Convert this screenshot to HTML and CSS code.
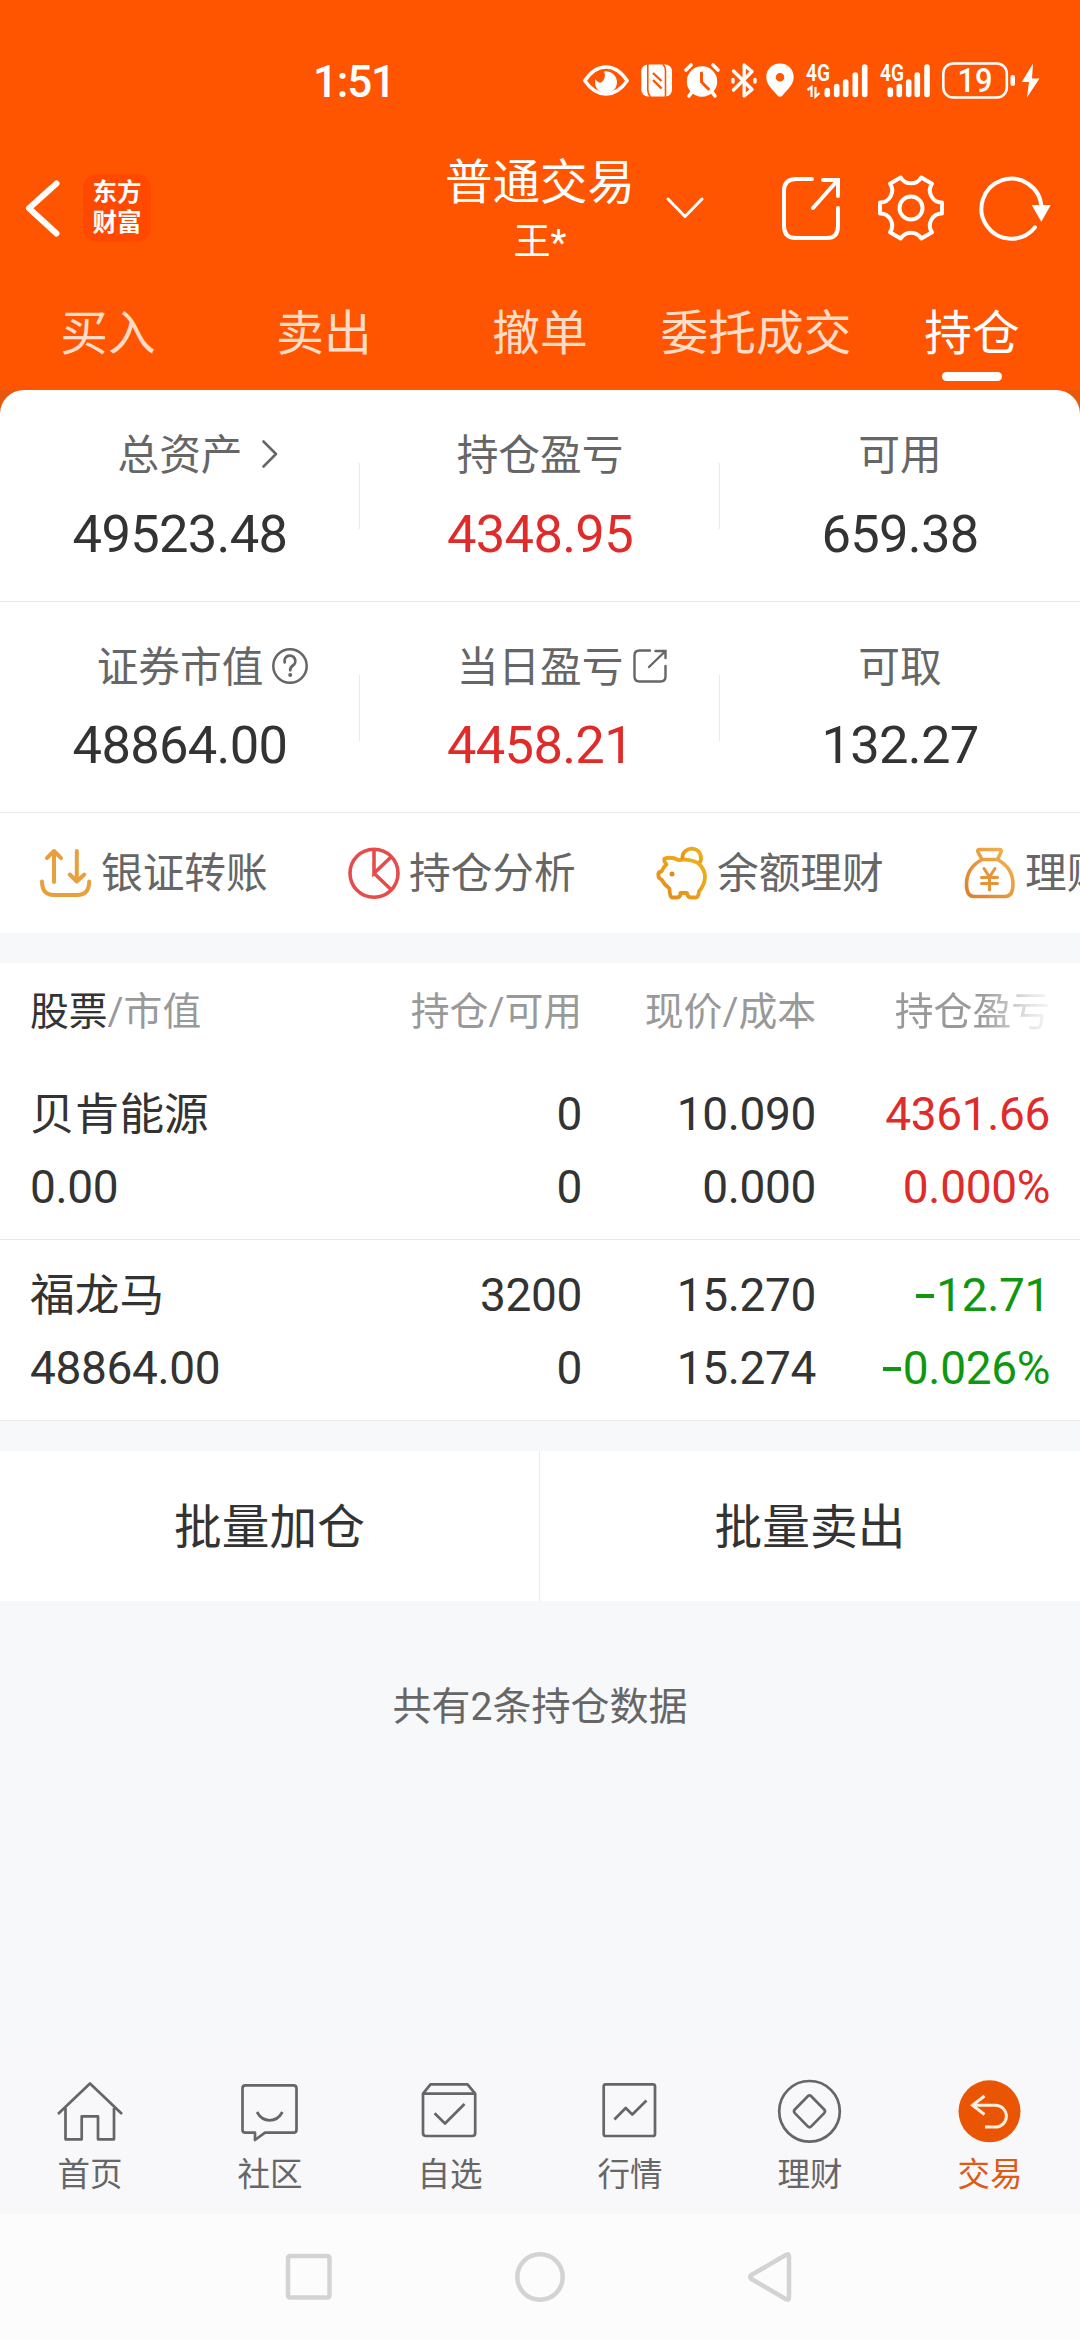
FILE: index.html
```html
<!DOCTYPE html>
<html lang="zh-CN">
<head>
<meta charset="utf-8">
<title>普通交易 - 持仓</title>
<link rel="stylesheet" href="styles.css">
</head>
<body>
<div class="phone">
  <header class="header">
    <div class="status">
      <span class="clock">1:51</span>
      <div class="status-icons">
        <svg width="48" height="44" viewBox="582 58 48 44"><path d="M584.8 80.7Q594 67 606 67T627.2 80.7Q618 94 606 94T584.8 80.7Z" fill="none" stroke="#fff" stroke-width="3.4" stroke-linejoin="round"/><path d="M604 71.500A11 11 0 1 1 595.500 79Q600 86 603.500 80Q606 76 604 71.500Z" fill="#fff"/></svg>
        <svg class="nfc" width="32" height="44" viewBox="641 58 32 44"><rect x="641.300" y="64.500" width="30.700" height="32" rx="6.500" fill="#fff"/><path d="M647.800 64V90Q647.800 94 650.500 97M665.500 97V71Q665.500 67 663 64" fill="none" stroke="#ff5500" stroke-width="1.600"/><path d="M653 73L661.500 81M653 80L661.500 88.500" fill="none" stroke="#ff5500" stroke-width="2.400"/></svg>
        <svg class="alarm" width="36" height="44" viewBox="684 58 36 44"><circle cx="702" cy="81.500" r="15.200" fill="#fff"/><path d="M686 70L691 65M718 70L713 65M692 92L689 96M712 92L715 96" stroke="#fff" stroke-width="3.600" stroke-linecap="round"/><path d="M701.500 73V82L708.500 89" fill="none" stroke="#ff5500" stroke-width="3" stroke-linecap="round"/></svg>
        <svg class="bt" width="26" height="44" viewBox="731 58 26 44"><path d="M733.500 71L752 89.500L744.200 96V65L752 71.500L733.500 90" fill="none" stroke="#fff" stroke-width="3.400" stroke-linecap="round" stroke-linejoin="round"/><path d="M733 79.500V82M755 79.500V82" stroke="#fff" stroke-width="3.400" stroke-linecap="round"/></svg>
        <svg class="pin" width="28" height="44" viewBox="766 58 28 44"><path fill-rule="evenodd" d="M780 63.500C788 63.500 793.700 69.500 793.700 77C793.700 85 786 91 782.500 95.500Q780 98 777.500 95.500C774 91 766.300 85 766.300 77C766.300 69.500 772 63.500 780 63.500ZM780 73A4.300 4.300 0 1 0 780 81.600A4.300 4.300 0 1 0 780 73Z" fill="#fff"/></svg>
        <svg class="sig1" width="62" height="44" viewBox="806 58 62 44"><text x="806" y="81" class="net" textLength="24" lengthAdjust="spacingAndGlyphs">4G</text><path d="M827.300 90.500V94.500M836.700 86.500V94.500M845.700 82V94.500M855.300 75V94.500M864.700 67V94.500" stroke="#fff" stroke-width="5.600" stroke-linecap="round"/><path d="M807.500 90L811.500 87V97M815.500 87V96.500L819.500 93" fill="none" stroke="#fff" stroke-width="2.200"/></svg>
        <svg class="sig2" width="51" height="44" viewBox="880 58 51 44"><text x="880" y="81" class="net" textLength="24" lengthAdjust="spacingAndGlyphs">4G</text><path d="M890.300 90V94.500M899.300 86.500V94.500M908.700 82V94.500M917.300 75V94.500M927 67V94.500" stroke="#fff" stroke-width="5.600" stroke-linecap="round"/></svg>
        <svg class="batt" width="74" height="44" viewBox="942 58 74 44"><rect x="943.300" y="63.500" width="63.500" height="34" rx="10" fill="none" stroke="#fff" stroke-width="2.600"/><rect x="1010.500" y="75" width="4.500" height="11" rx="2" fill="#fff"/><text x="975" y="92" class="pct" text-anchor="middle" textLength="35" lengthAdjust="spacingAndGlyphs">19</text></svg>
        <svg class="bolt" width="18" height="44" viewBox="1022 58 18 44"><path d="M1033 63.500L1021.800 82H1029L1027 97.500L1039.500 78.500H1032Z" fill="#fff"/></svg>
      </div>
    </div>

    <div class="titlebar">
      <div class="title-left">
        <svg width="36" height="60" viewBox="26 178 36 60"><path d="M56.500 183.500L29 208.300L56.500 233.500" fill="none" stroke="#fff" stroke-width="6" stroke-linecap="round" stroke-linejoin="round"/></svg>
        <div class="logo">东方<br>财富</div>
      </div>
      <div class="title">
        <div class="title-main">普通交易</div>
        <div class="title-sub">王*</div>
      </div>
      <div class="title-right">
        <svg class="down" width="40" height="30" viewBox="664 192 40 30"><path d="M667 198L684 215.500L701 198" fill="none" stroke="#fff" stroke-width="3" stroke-linecap="round" stroke-linejoin="round"/></svg>
        <svg class="share" width="60" height="68" viewBox="780 174 60 68"><g fill="none" stroke="#fff" stroke-width="4" stroke-linecap="round"><path d="M811 179H795Q783 179 783 191V226Q783 238 795 238H826Q837 238 837 226V208"/><path d="M822 180H837V196M812 208L836 181"/></g></svg>
        <svg class="gear" width="68" height="68" viewBox="-34 -34 68 68"><path d="M-10.300-30.500A12 12 0 0 0 10.300-30.500L21-24.300A12 12 0 0 0 31-5.500V5.500A12 12 0 0 0 21 24.300L10.300 30.500A12 12 0 0 0-10.300 30.500L-21 24.300A12 12 0 0 0-31 5.500V-5.500A12 12 0 0 0-21-24.300Z" fill="none" stroke="#fff" stroke-width="4" stroke-linejoin="round"/><circle r="11.500" fill="none" stroke="#fff" stroke-width="4"/></svg>
        <svg class="refresh" width="74" height="68" viewBox="978 174 74 68"><path d="M1034 227.300A30 30 0 1 1 1040.400 207" fill="none" stroke="#fff" stroke-width="4" stroke-linecap="round"/><path d="M1030.700 205H1049.800L1040.300 221.700Z" fill="#fff"/></svg>
      </div>
    </div>

    <nav class="tabs">
      <a class="tab">买入</a><a class="tab">卖出</a><a class="tab">撤单</a><a class="tab">委托成交</a><a class="tab tab-active">持仓</a>
    </nav>
  </header>

  <div class="card-wrap">
    <section class="card">
      <div class="stats">
        <div class="stat">
          <div class="label"><span></span>总资产<svg class="hint chevron" width="18" height="30" viewBox="260 439 18 30"><path d="M262.500 441.500L275 454L262.500 466.500" fill="none" stroke="#666" stroke-width="2.600" stroke-linecap="round" stroke-linejoin="round"/></svg></div>
          <div class="value">49523.48</div>
        </div>
        <div class="stat"><div class="label">持仓盈亏</div><div class="value up">4348.95</div></div>
        <div class="stat"><div class="label">可用</div><div class="value">659.38</div></div>
      </div>
      <div class="stats">
        <div class="stat">
          <div class="label"><span></span>证券市值<svg class="hint" width="38" height="38" viewBox="0 0 38 38"><circle cx="19" cy="19" r="16.700" fill="none" stroke="#666" stroke-width="2.500"/><path d="M13.700 15.300A5.400 5.400 0 1 1 21.900 18.500Q19.200 20.300 19.200 23.300" fill="none" stroke="#666" stroke-width="2.800" stroke-linecap="round"/><circle cx="19.200" cy="28" r="2" fill="#666"/></svg></div>
          <div class="value">48864.00</div>
        </div>
        <div class="stat">
          <div class="label"><span></span>当日盈亏<svg class="hint ext" width="36" height="36" viewBox="632.500 647 36 36"><g fill="none" stroke="#666" stroke-width="2.400" stroke-linecap="round"><path d="M650.500 649.500H640Q635 649.500 635 654.500V675.500Q635 680.500 640 680.500H661Q666 680.500 666 675.500V665"/><path d="M656 650H666V657M649.500 666L665 651"/></g></svg></div>
          <div class="value up">4458.21</div>
        </div>
        <div class="stat"><div class="label">可取</div><div class="value">132.27</div></div>
      </div>
      <div class="quick">
        <div class="quick-item"><svg width="52" height="52" viewBox="40 846 52 52"><g fill="none" stroke="#e8a03c" stroke-width="4" stroke-linecap="round" stroke-linejoin="round"><path d="M54 881V850M47 857L54 850L61 857M76.800 850V880M69.800 873.500L76.800 880.500L84.300 873.500M42 880.500Q42 894 54 894H77Q89.200 894 89.200 880.500"/></g></svg><span>银证转账</span></div>
        <div class="quick-item"><svg width="52" height="52" viewBox="347.500 846 52 52"><g fill="none" stroke="#e64c4c" stroke-width="3.600"><circle cx="373.500" cy="872.300" r="24"/><path d="M373.500 848V872.300L390.500 856M373.500 872.300L390.500 888.500"/></g></svg><span>持仓分析</span></div>
        <div class="quick-item"><svg width="52" height="52" viewBox="655.500 846 52 52"><defs><linearGradient id="pig" x1="0" y1="1" x2="1" y2="0"><stop offset="0" stop-color="#e48a1e"/><stop offset="1" stop-color="#f0b414"/></linearGradient></defs><g fill="none" stroke="url(#pig)" stroke-width="3.800" stroke-linejoin="round"><path d="M678 859Q671 855.500 664 857.500Q663 860 666 863.500Q663 866 661 870.500Q657.800 871 657.800 873.500Q657.800 877.500 661 878.500Q664 884 669 887.500Q669 896.500 672 896.500H676.500Q680 896.500 680 892H686.500Q687 896.500 690.500 896.500H695Q698 896.500 698.500 890.500Q704.500 883 704.500 876Q704.500 868 697.500 862Q689 857.500 678 859Z"/><path d="M682 858A9.300 9.300 0 1 1 699 862"/></g><circle cx="671.500" cy="873" r="2.500" fill="#e48a1e"/></svg><span>余额理财</span></div>
        <div class="quick-item"><svg width="52" height="52" viewBox="963.500 846 52 52"><defs><linearGradient id="bag" x1="0" y1="1" x2="1" y2="0"><stop offset="0" stop-color="#e07e28"/><stop offset="1" stop-color="#f2b552"/></linearGradient></defs><g fill="none" stroke="url(#bag)" stroke-width="3.600" stroke-linecap="round" stroke-linejoin="round"><path d="M981.500 858.500L977.500 851Q976.500 848.500 979 848.500H999Q1001.500 848.500 1000.500 851L997 858.500ZM981.500 858.500Q966 867 966 883Q966 895.500 973.500 895.500H1004.500Q1012.500 895.500 1012.500 883Q1012.500 867 997 858.500"/></g><path d="M983.500 867.500L989 876L994.500 867.500M989 876V889M981 876.500H997M981 882.500H997" fill="none" stroke="#e8923a" stroke-width="3" stroke-linecap="round"/></svg><span>理财</span></div>
      </div>
    </section>
  </div>

  <section class="holdings">
    <div class="row row-head"><span><b>股票</b>/市值</span><span>持仓/可用</span><span>现价/成本</span><span class="fade">持仓盈亏</span></div>
    <div class="row row-data">
      <span class="name">贝肯能源</span><span>0</span><span>10.090</span><span class="up">4361.66</span>
      <span>0.00</span><span>0</span><span>0.000</span><span class="up">0.000%</span>
    </div>
    <div class="row row-data">
      <span class="name">福龙马</span><span>3200</span><span>15.270</span><span class="down-val"><i class="minus"></i>12.71</span>
      <span>48864.00</span><span>0</span><span>15.274</span><span class="down-val"><i class="minus"></i>0.026%</span>
    </div>
  </section>

  <div class="actions"><button class="action">批量加仓</button><button class="action">批量卖出</button></div>
  <p class="summary">共有2条持仓数据</p>

  <nav class="bottom">
    <a class="nav"><svg width="66" height="66" viewBox="0 0 66 66"><path d="M1 36L33 5.500L65 36M8.500 30V61.300H24.700V38.300H41V61.300H57V30"/></svg>首页</a>
    <a class="nav"><svg width="66" height="66" viewBox="0 0 66 66"><path d="M8.500 7.300H56.500Q59.500 7.300 59.500 10.300V51.700Q59.500 54.700 56.500 54.700H28L18 62V54.700H8.500Q5.500 54.700 5.500 51.700V10.300Q5.500 7.300 8.500 7.300ZM20 34Q24.500 42.300 32.700 42.300T45.400 34"/></svg>社区</a>
    <a class="nav"><svg width="66" height="66" viewBox="0 0 66 66"><path d="M6 15.700L13.500 6.300H50.500L58.200 15.700V55Q58.200 58 55.200 58H9Q6 58 6 55ZM6 15.700H58.200M17.600 35.300L28 45.500L47.500 26"/></svg>自选</a>
    <a class="nav"><svg width="66" height="66" viewBox="0 0 66 66"><rect x="6.700" y="6.300" width="51.300" height="51.700" rx="2"/><path d="M17.400 41.500L28.700 30L35.300 36.500L49.500 22.500"/></svg>行情</a>
    <a class="nav"><svg width="66" height="66" viewBox="0 0 66 66"><circle cx="32.500" cy="33.300" r="30.300"/><path d="M31 18L17.800 31.500Q16.200 33.300 17.800 35.100L31 48.600Q32.500 50 34 48.600L47.200 35.100Q48.800 33.300 47.200 31.500L34 18Q32.500 16.600 31 18Z"/></svg>理财</a>
    <a class="nav nav-active"><svg width="66" height="66" viewBox="0 0 66 66"><circle class="disc" cx="32.500" cy="33.300" r="31"/><path class="arrow" d="M27.500 18L15.500 27.300L27.500 36.500M15.500 27.300H38.500A10.800 10.800 0 0 1 38.500 49H28"/></svg>交易</a>
  </nav>
  <div class="sysnav">
    <svg width="46" height="50" viewBox="0 0 46 50"><rect x="2" y="4" width="41.500" height="41.500" rx="2"/></svg>
    <svg width="50" height="50" viewBox="0 0 50 50"><circle cx="25" cy="25" r="22.700"/></svg>
    <svg width="44" height="50" viewBox="0 0 44 50"><path d="M3 23.300L38.500 2.600Q41 1.700 41 4.500V45.500Q41 48.300 38.500 47.400L3 26.700Q1.500 25 3 23.300Z"/></svg>
  </div>
</div>
</body>
</html>
```

FILE: styles.css
```css
* { box-sizing: border-box; }

body {
  margin: 0;
  background: #f7f8fa;
  color: #333;
  font-family: Roboto, "Noto Sans CJK SC", sans-serif;
}

svg { display: block; flex: none; overflow: visible; }

.phone {
  width: 1080px;
  height: 2340px;
  display: flex;
  flex-direction: column;
  overflow: hidden;
}

/* header */
.header {
  height: 390px;
  background: #ff5500;
  color: #fff;
}

.status {
  height: 128px;
  padding: 58px 40px 0 313px;
  display: flex;
  justify-content: space-between;
}

.clock {
  font-size: 44px;
  line-height: 48px;
  font-weight: 500;
  letter-spacing: -1.2px;
}

.status-icons { display: flex; }
.nfc { margin-left: 11px; }
.alarm { margin-left: 11px; }
.bt { margin-left: 11px; }
.pin { margin-left: 9px; }
.sig1 { margin-left: 12px; }
.sig2 { margin-left: 12px; }
.batt { margin-left: 11px; }
.bolt { margin-left: 6px; }

.net { font-size: 23px; font-weight: 600; fill: #fff; }
.pct { font-size: 33px; font-weight: 500; fill: #fff; }

.titlebar {
  height: 160px;
  display: grid;
  grid-template-columns: 1fr auto 1fr;
  align-items: center;
}

.title-left {
  display: flex;
  align-items: center;
  gap: 21px;
  padding-left: 26px;
}

.logo {
  width: 68px;
  height: 68px;
  padding-top: 4px;
  border-radius: 14px;
  background: #ff4800;
  text-align: center;
  font-size: 24.500px;
  line-height: 29.500px;
  font-weight: 700;
}

.title { padding-top: 10px; text-align: center; }
.title-main { font-size: 47.500px; line-height: 60px; }
.title-sub { font-size: 37px; line-height: 60px; }

.title-right {
  display: flex;
  align-items: center;
  justify-content: flex-end;
  padding-right: 27px;
}

.share { margin-left: 76px; }
.gear { margin-left: 36px; }
.refresh { margin-left: 34px; }

.tabs {
  height: 102px;
  display: grid;
  grid-template-columns: repeat(5, 1fr);
}

.tab {
  display: flex;
  flex-direction: column;
  align-items: center;
  padding-top: 11px;
  font-size: 47.700px;
  line-height: 70px;
  color: #ffdcc8;
}

.tab-active { color: #fff; }

.tab-active::after {
  content: "";
  width: 60px;
  height: 9px;
  margin-top: 3px;
  border-radius: 5px;
  background: #fff;
}

/* asset summary */
.card-wrap {
  background: linear-gradient(#e8580c 24px, #fff 24px);
}

.card {
  height: 543px;
  border-radius: 24px 24px 0 0;
  background: #fff;
  overflow: hidden;
}

.stats {
  height: 211px;
  display: grid;
  grid-template-columns: repeat(3, 1fr);
  border-bottom: 1px solid #eaeaea;
}

.stat {
  padding-top: 34px;
  text-align: center;
  background: linear-gradient(#eaeaea, #eaeaea) right 73px / 1px 66px no-repeat;
}

.stat:last-child { background: none; }

.stats:first-child { height: 212px; }

.label {
  display: grid;
  grid-template-columns: 1fr auto 1fr;
  align-items: center;
  font-size: 41.700px;
  line-height: 64px;
  color: #666;
}

.label:not(:has(span)) { display: block; }
.hint { margin-left: 8px; margin-top: -4px; }
.ext { margin-left: 9px; }
.chevron { margin-left: 18px; }

.value {
  margin-top: 14px;
  font-size: 52.500px;
  line-height: 64px;
  letter-spacing: -0.700px;
}

.stats + .stats .value { margin-top: 13px; }

.up { color: #e02b2b; }
.down-val { color: #0f980f; }

.quick {
  height: 120px;
  display: flex;
  gap: 79px;
  padding-left: 40px;
}

.quick-item {
  display: flex;
  flex: none;
  align-items: center;
  gap: 9px;
  width: 229px;
  font-size: 41.700px;
  line-height: 60px;
  color: #666;
  white-space: nowrap;
}

.quick-item span { padding-top: 1px; }

/* holdings */
.holdings { margin-top: 30px; background: #fff; }

.row {
  display: grid;
  grid-template-columns: 318px repeat(3, 234px);
  padding: 0 30px;
  text-align: right;
}

.row > span:nth-child(4n+1) { text-align: left; }

.row-head {
  height: 95px;
  padding-top: 18px;
  font-size: 38.800px;
  line-height: 62px;
  color: #999;
}

.row-head b { font-weight: 400; color: #333; }

.fade {
  -webkit-mask-image: linear-gradient(to right, #000 0, #000 165px, rgba(0, 0, 0, .25) 215px, transparent 245px);
  mask-image: linear-gradient(to right, #000 0, #000 165px, rgba(0, 0, 0, .25) 215px, transparent 245px);
}

.row-data {
  height: 182px;
  padding-top: 20px;
  grid-auto-rows: 73px;
  font-size: 46px;
  line-height: 73px;
  letter-spacing: -0.350px;
  border-bottom: 1px solid #eaeaea;
}

.row-data + .row-data { height: 181px; padding-top: 19px; }
.name { padding-top: 1px; font-size: 44.700px; letter-spacing: 0; }

.minus {
  display: inline-block;
  width: 18px;
  height: 4px;
  margin-right: 2px;
  vertical-align: 13px;
  background: #0f980f;
}

.actions {
  height: 150px;
  margin-top: 30px;
  display: grid;
  grid-template-columns: 1fr 1fr;
  background: #fff;
}

.action {
  border: 0;
  padding: 0 0 5px;
  background: none;
  color: #333;
  font: 47.700px Roboto, "Noto Sans CJK SC", sans-serif;
}

.action:first-child { border-right: 1px solid #eaeaea; }

.summary {
  flex: 1;
  margin: 0;
  padding-top: 75px;
  text-align: center;
  font-size: 39px;
  line-height: 62px;
  color: #666;
}

/* bottom navigation */
.bottom {
  height: 160px;
  display: grid;
  grid-template-columns: repeat(6, 1fr);
  background: #f8f8fb;
}

.nav {
  display: flex;
  flex-direction: column;
  align-items: center;
  padding-top: 24px;
  font-size: 32.500px;
  line-height: 62px;
  color: #666;
}

.nav svg { fill: none; stroke: #666; stroke-width: 2.700; stroke-linejoin: round; }
.nav-active { color: #e05a14; }
.nav .disc { fill: #ea5504; stroke: none; }
.nav .arrow { stroke: #ffeedd; stroke-width: 3; stroke-linejoin: miter; }

.sysnav {
  height: 126px;
  display: flex;
  align-items: center;
  gap: 183px;
  padding-left: 286px;
  background: #fcfcfc;
}

.sysnav svg { fill: none; stroke: #d3d3d3; stroke-width: 4.500; }
```
